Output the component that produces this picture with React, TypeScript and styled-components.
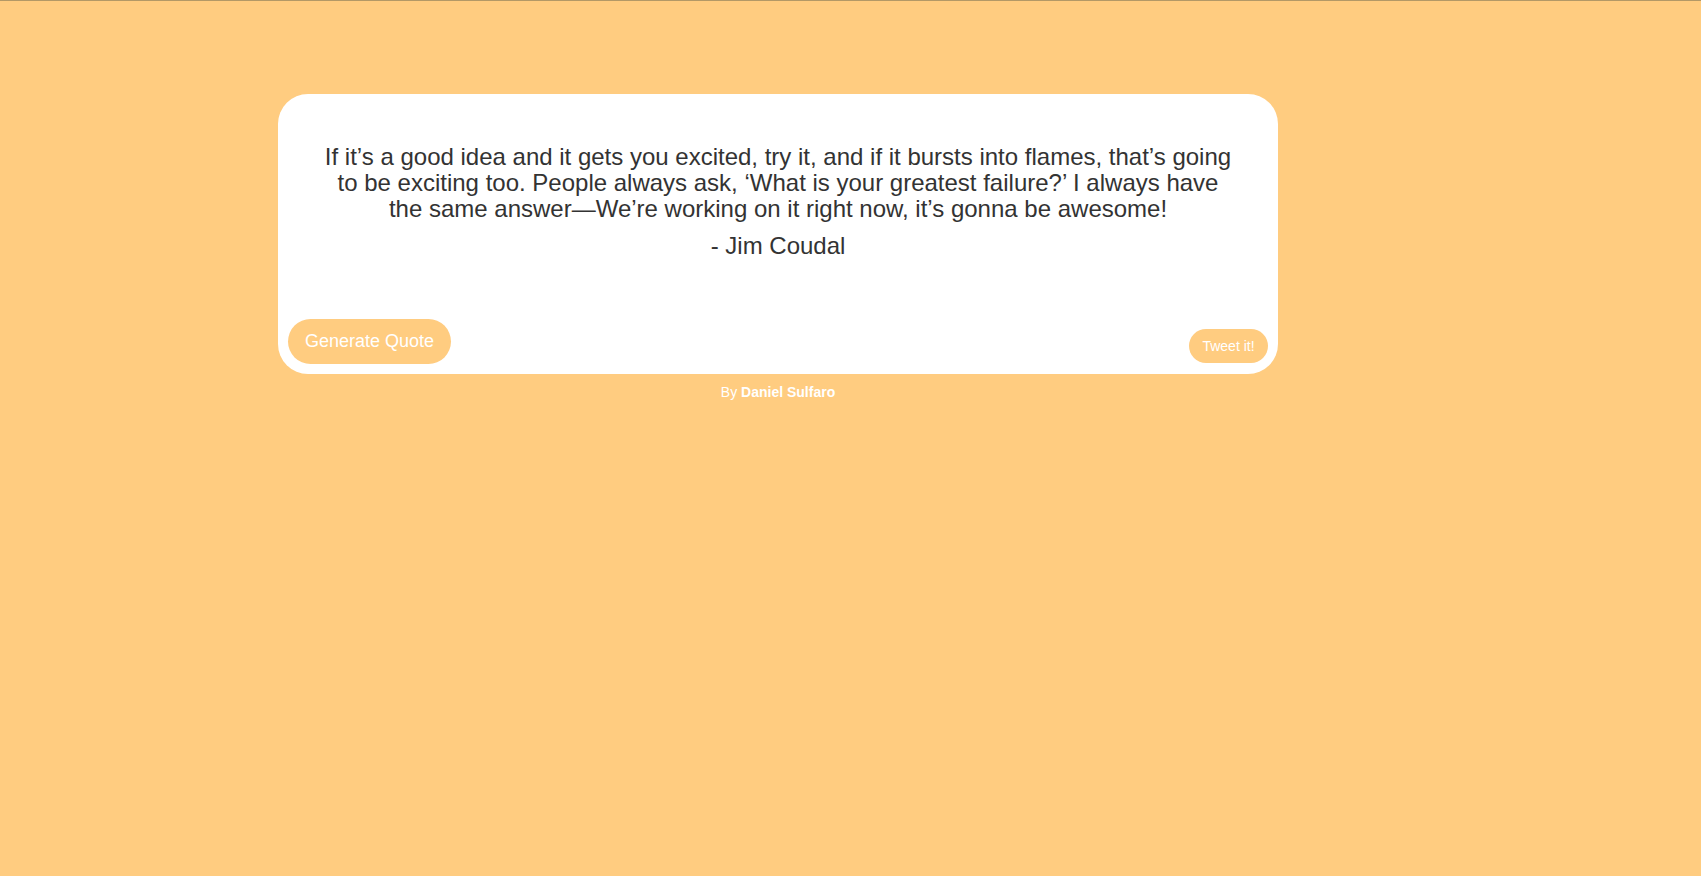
import React from "react";
import styled, { createGlobalStyle } from "styled-components";

const GlobalStyle = createGlobalStyle`
  html, body {
    margin: 0;
    padding: 0;
    background: #ffcc80;
    font-family: "Liberation Sans", Arial, sans-serif;
  }
  body {
    min-height: 876px;
    border-top: 1px solid #b39866;
    box-sizing: border-box;
  }
`;

const Page = styled.main`
  padding: 93px 0 0 278px;
`;

const Column = styled.div`
  width: 1000px;
  display: flex;
  flex-direction: column;
  align-items: center;
`;

const Card = styled.section`
  width: 1000px;
  height: 280px;
  box-sizing: border-box;
  background: #ffffff;
  border-radius: 30px;
  display: flex;
  flex-direction: column;
`;

const QuoteBlock = styled.blockquote`
  margin: 0;
  padding: 50px 45px 0;
  text-align: center;
  color: #333333;
  font-size: 24px;
  line-height: 26px;
`;

const QuoteText = styled.p`
  margin: 0;
`;

const Author = styled.p`
  margin: 11px 0 0;
`;

const Actions = styled.div`
  margin-top: auto;
  display: flex;
  justify-content: space-between;
  align-items: flex-end;
  padding: 0 10px 10px;
`;

const PillButton = styled.button<{ $size: "lg" | "sm" }>`
  border: none;
  background: #ffcc80;
  color: #ffffff;
  font-family: "Liberation Sans", Arial, sans-serif;
  border-radius: 999px;
  cursor: pointer;
  font-size: ${(p) => (p.$size === "lg" ? "18px" : "14px")};
  height: ${(p) => (p.$size === "lg" ? "45px" : "34px")};
  width: ${(p) => (p.$size === "lg" ? "163px" : "79px")};
  margin-bottom: ${(p) => (p.$size === "lg" ? "0" : "1px")};
  padding: 0;
`;

const Credit = styled.p`
  margin: 10px 0 0;
  color: #ffffff;
  font-size: 14px;
  strong {
    font-weight: bold;
  }
`;

export default function App() {
  return (
    <>
      <GlobalStyle />
      <Page>
        <Column>
          <Card>
            <QuoteBlock>
              <QuoteText>
                If it’s a good idea and it gets you excited, try it, and if it bursts into flames, that’s going to be exciting too. People always ask, ‘What is your greatest failure?’ I always have the same answer—We’re working on it right now, it’s gonna be awesome!
              </QuoteText>
              <Author>- Jim Coudal</Author>
            </QuoteBlock>
            <Actions>
              <PillButton $size="lg">Generate Quote</PillButton>
              <PillButton $size="sm">Tweet it!</PillButton>
            </Actions>
          </Card>
          <Credit>
            By <strong>Daniel Sulfaro</strong>
          </Credit>
        </Column>
      </Page>
    </>
  );
}
